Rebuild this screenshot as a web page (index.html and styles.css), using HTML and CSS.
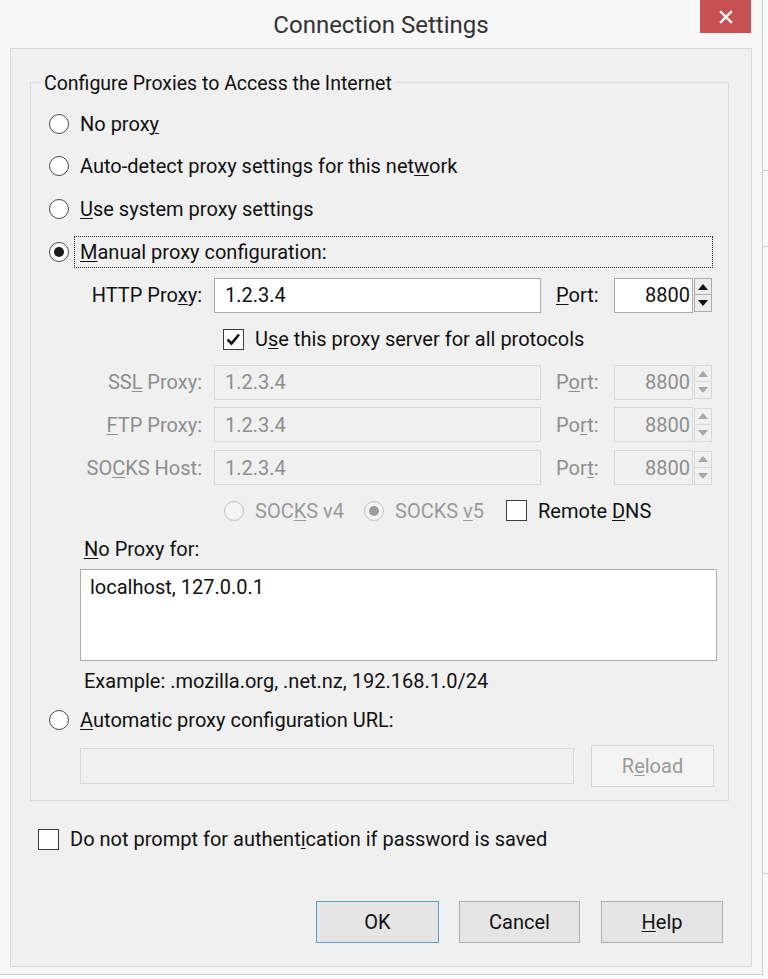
FILE: index.html
```
<!DOCTYPE html>
<html>
<head>
<meta charset="utf-8">
<title>Connection Settings</title>
<link rel="stylesheet" href="styles.css">
</head>
<body>
<div class="window">
  <div class="titlebar">
    <div class="tb-side"></div>
    <div class="title">Connection Settings</div>
    <div class="tb-side tb-right">
      <div class="close"><svg width="14" height="14" viewBox="0 0 14 14"><path d="M2 2 L12 12 M12 2 L2 12" stroke="#fff" stroke-width="2.4" stroke-linecap="square"/></svg></div>
    </div>
  </div>
  <div class="client">
    <fieldset class="group">
      <legend>Configure Proxies to Access the Internet</legend>

      <div class="row h42">
        <span class="radio"></span>
        <span class="opt">No prox<u>y</u></span>
      </div>
      <div class="row h42">
        <span class="radio"></span>
        <span class="opt">Auto-detect proxy settings for this net<u>w</u>ork</span>
      </div>
      <div class="row h44">
        <span class="radio"></span>
        <span class="opt"><u>U</u>se system proxy settings</span>
      </div>
      <div class="row h42">
        <span class="radio on"></span>
        <span class="opt focus"><u>M</u>anual proxy configuration:</span>
      </div>

      <div class="row h44">
        <span class="flabel">HTTP Pro<u>x</u>y:</span>
        <span class="field"><span class="val">1.2.3.4</span></span>
        <span class="plabel"><u>P</u>ort:</span>
        <span class="port"><span class="val">8800</span></span>
        <span class="spin"><span class="up"><i class="tri-up"></i></span><span class="down"><i class="tri-down"></i></span></span>
      </div>
      <div class="row h44">
        <span class="check chk-all"><svg width="19" height="19" viewBox="0 0 19 19"><path d="M3.5 9.5 L7.5 13.5 L15 4.5" fill="none" stroke="#111" stroke-width="2.6"/></svg></span>
        <span class="ctext">U<u>s</u>e this proxy server for all protocols</span>
      </div>
      <div class="row h42 dis">
        <span class="flabel">SS<u>L</u> Proxy:</span>
        <span class="field"><span class="val">1.2.3.4</span></span>
        <span class="plabel">P<u>o</u>rt:</span>
        <span class="port"><span class="val">8800</span></span>
        <span class="spin"><span class="up"><i class="tri-up"></i></span><span class="down"><i class="tri-down"></i></span></span>
      </div>
      <div class="row h43 dis">
        <span class="flabel"><u>F</u>TP Proxy:</span>
        <span class="field"><span class="val">1.2.3.4</span></span>
        <span class="plabel">Po<u>r</u>t:</span>
        <span class="port"><span class="val">8800</span></span>
        <span class="spin"><span class="up"><i class="tri-up"></i></span><span class="down"><i class="tri-down"></i></span></span>
      </div>
      <div class="row h43 dis">
        <span class="flabel">SO<u>C</u>KS Host:</span>
        <span class="field"><span class="val">1.2.3.4</span></span>
        <span class="plabel">Por<u>t</u>:</span>
        <span class="port"><span class="val">8800</span></span>
        <span class="spin"><span class="up"><i class="tri-up"></i></span><span class="down"><i class="tri-down"></i></span></span>
      </div>
      <div class="row h43 socks">
        <span class="sitem s4"><span class="radio off"></span><span class="stext">SOC<u>K</u>S v4</span></span>
        <span class="sitem s5"><span class="radio off on"></span><span class="stext">SOCKS <u>v</u>5</span></span>
        <span class="check"></span>
        <span class="ctext">Remote <u>D</u>NS</span>
      </div>
      <div class="row h34">
        <span class="nolabel"><u>N</u>o Proxy for:</span>
      </div>
      <div class="textarea">localhost, 127.0.0.1</div>
      <div class="row h40">
        <span class="nolabel">Example: .mozilla.org, .net.nz, 192.168.1.0/24</span>
      </div>
      <div class="row h38">
        <span class="radio"></span>
        <span class="opt"><u>A</u>utomatic proxy configuration URL:</span>
      </div>
      <div class="row urlrow">
        <span class="urlfield"></span>
        <span class="btn reload">R<u>e</u>load</span>
      </div>
    </fieldset>

    <div class="row auth">
      <span class="check"></span>
      <span class="ctext">Do not prompt for authent<u>i</u>cation if password is saved</span>
    </div>

    <div class="buttons">
      <span class="btn ok">OK</span>
      <span class="btn cancel">Cancel</span>
      <span class="btn help"><u>H</u>elp</span>
    </div>
  </div>
</div>
<div class="behind">
  <div class="tick t1"></div>
  <div class="tick t2"></div>
  <div class="tick t3"></div>
</div>
</body>
</html>
```
FILE: styles.css
```
html, body {
  margin: 0;
  padding: 0;
}
body {
  width: 768px;
  height: 979px;
  overflow: hidden;
  background: #fbfbfb;
  font-family: Roboto, "Noto Sans", "Liberation Sans", sans-serif;
  font-size: 20px;
  color: #111;
  display: flex;
  align-items: flex-start;
}
u {
  text-decoration: underline;
  text-decoration-thickness: 1px;
  text-underline-offset: 2px;
}

.window {
  width: 763px;
  height: 975px;
  box-sizing: border-box;
  background: #f7f7f7;
  border-right: 1px solid #cdcdcd;
  border-bottom: 1px solid #cdcdcd;
  display: flex;
  flex-direction: column;
  flex: none;
}

.titlebar {
  height: 48px;
  display: grid;
  grid-template-columns: 1fr auto 1fr;
  flex: none;
}
.title {
  font-size: 24px;
  color: #333;
  align-self: center;
  padding-top: 1px;
}
.tb-right {
  display: flex;
  justify-content: flex-end;
  align-items: flex-start;
}
.close {
  width: 51px;
  height: 33px;
  margin-right: 11px;
  background: #c75050;
  display: flex;
  align-items: center;
  justify-content: center;
}

.client {
  margin-left: 10px;
  width: 742px;
  height: 919px;
  box-sizing: border-box;
  background: #f0f0f0;
  border: 1px solid #d9d9d9;
  flex: none;
}

.group {
  margin: 19px 0 0 19px;
  width: 699px;
  box-sizing: border-box;
  border: 1px solid #dcdcdc;
  padding: 7px 0 13px 18px;
  min-width: 0;
}
.group legend {
  padding: 4px 3px 0 3px;
  margin-left: -8px;
  line-height: 24px;
  font-size: 19.5px;
}

.row {
  display: flex;
  align-items: center;
}
.h34 { height: 34px; }
.h38 { height: 38px; }
.h40 { height: 40px; }
.h42 { height: 42px; }
.h43 { height: 43px; }
.h44 { height: 44px; }

.radio {
  width: 20px;
  height: 20px;
  box-sizing: border-box;
  border-radius: 50%;
  border: 1px solid #4a4a4a;
  background: #fff;
  flex: none;
  display: flex;
  align-items: center;
  justify-content: center;
}
.radio.on::after {
  content: "";
  width: 10px;
  height: 10px;
  border-radius: 50%;
  background: #1a1a1a;
}
.radio.off {
  border-color: #c2c2c2;
  background: #f4f4f4;
}
.radio.off.on::after {
  background: #9c9c9c;
}

.opt {
  margin-left: 5px;
  padding: 0 5px;
  border: 1px dotted transparent;
  height: 32px;
  box-sizing: border-box;
  display: flex;
  align-items: center;
}
.opt.focus {
  border-color: #222;
  flex: 1;
  margin-right: 15px;
}

.flabel {
  margin-left: 31px;
  width: 122px;
  text-align: right;
  flex: none;
}
.field {
  margin-left: 12px;
  width: 327px;
  height: 35px;
  box-sizing: border-box;
  border: 1px solid #acacac;
  background: #fff;
  display: flex;
  align-items: center;
  padding-left: 10px;
  flex: none;
}
.plabel {
  margin-left: 15px;
  width: 43px;
  flex: none;
}
.port {
  margin-left: 15px;
  width: 79px;
  height: 35px;
  box-sizing: border-box;
  border: 1px solid #acacac;
  background: #fff;
  display: flex;
  align-items: center;
  justify-content: flex-end;
  padding-right: 2px;
  flex: none;
}
.spin {
  margin-left: 1px;
  width: 18px;
  height: 34px;
  display: flex;
  flex-direction: column;
  flex: none;
}
.spin .up, .spin .down {
  height: 17px;
  box-sizing: border-box;
  border: 1px solid #acacac;
  background: #ececec;
  display: flex;
  align-items: center;
  justify-content: center;
}
.spin .down {
  border-top: none;
}
.tri-up {
  width: 0;
  height: 0;
  border-left: 5px solid transparent;
  border-right: 5px solid transparent;
  border-bottom: 6px solid #111;
}
.tri-down {
  width: 0;
  height: 0;
  border-left: 5px solid transparent;
  border-right: 5px solid transparent;
  border-top: 6px solid #111;
}

.dis {
  color: #8e8e8e;
}
.dis .field, .dis .port {
  background: #f0f0f0;
  border-color: #d9d9d9;
}
.dis .spin .up, .dis .spin .down {
  border-color: #d9d9d9;
  background: #f0f0f0;
}
.dis .tri-up { border-bottom-color: #a8a8a8; }
.dis .tri-down { border-top-color: #a8a8a8; }

.check {
  width: 21px;
  height: 21px;
  box-sizing: border-box;
  border: 1px solid #3c3c3c;
  background: #fff;
  flex: none;
  display: flex;
  align-items: center;
  justify-content: center;
}
.chk-all {
  margin-left: 174px;
}
.ctext {
  margin-left: 11px;
}

.socks .sitem {
  display: flex;
  align-items: center;
  flex: none;
  color: #9a9a9a;
}
.socks .s4 {
  margin-left: 175px;
  width: 140px;
}
.socks .s5 {
  width: 142px;
}
.stext {
  margin-left: 11px;
}

.nolabel {
  margin-left: 35px;
}
.textarea {
  margin-left: 31px;
  margin-top: 3px;
  width: 637px;
  height: 92px;
  box-sizing: border-box;
  border: 1px solid #acacac;
  background: #fff;
  padding: 4px 9px;
  line-height: 26px;
}

.urlrow {
  margin-top: 6px;
  height: 42px;
}
.urlfield {
  margin-left: 31px;
  width: 494px;
  height: 36px;
  box-sizing: border-box;
  border: 1px solid #d9d9d9;
  background: #f0f0f0;
  flex: none;
}

.btn {
  box-sizing: border-box;
  height: 42px;
  display: flex;
  align-items: center;
  justify-content: center;
  border: 1px solid #adadad;
  background: #e5e5e5;
  flex: none;
}
.reload {
  margin-left: 17px;
  width: 123px;
  background: #f4f4f4;
  border-color: #d6d6d6;
  color: #9a9a9a;
}

.auth {
  height: 76px;
}
.auth .check {
  margin-left: 27px;
}

.buttons {
  display: flex;
  margin-top: 24px;
  margin-left: 305px;
}
.ok {
  width: 123px;
  border-color: #5a9fd6;
}
.cancel {
  margin-left: 20px;
  width: 121px;
}
.help {
  margin-left: 21px;
  width: 122px;
}

.behind {
  flex: 1;
  height: 979px;
  display: flex;
  flex-direction: column;
  background: #fbfbfb;
}
.tick {
  height: 0;
  border-top: 1px solid #cfcfcf;
}
.t1 { margin-top: 170px; }
.t2 { margin-top: 75px; }
.t3 { margin-top: 626px; }
```
